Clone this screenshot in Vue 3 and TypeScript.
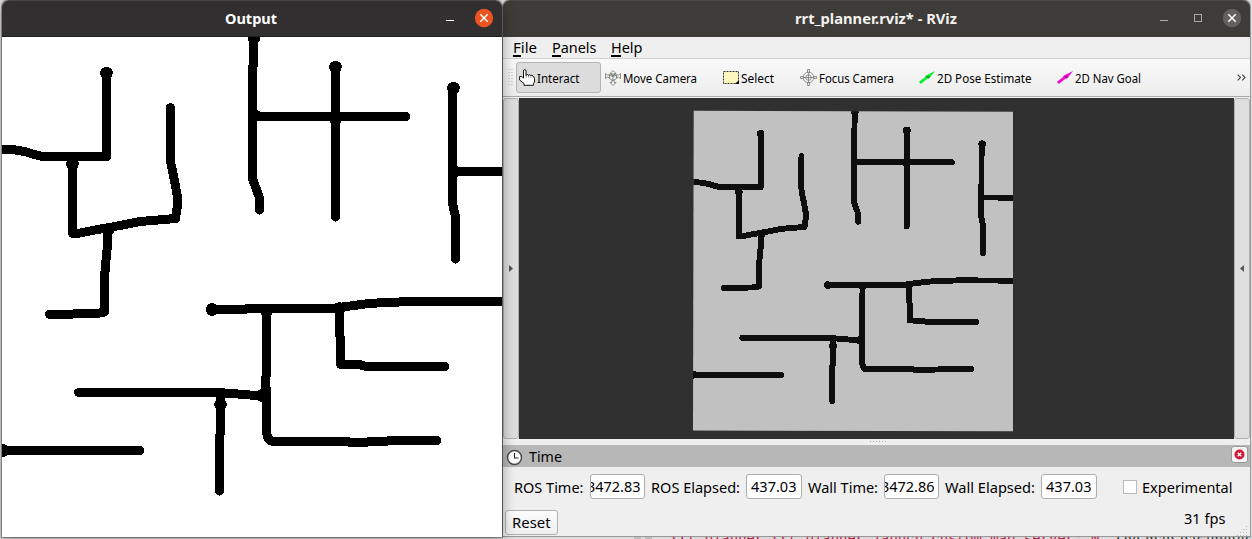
<script setup lang="ts">
import { h } from 'vue'

interface LabelProps { text: string; w: number; size?: number; weight?: number }

// Single line of text set to an exact advance width
const Label = (p: LabelProps) =>
  h('svg', { width: p.w, height: 20, overflow: 'visible', style: { flex: 'none', display: 'block' } }, [
    h('text', {
      x: 0, y: 15, 'font-size': p.size ?? 15, 'font-weight': p.weight ?? 400,
      fill: 'currentColor', textLength: p.w, lengthAdjust: 'spacingAndGlyphs',
    }, p.text),
  ])
Label.props = ['text', 'w', 'size', 'weight']

const walls: string[] = [
  '106.5,73 106.5,157 97,156.5 43,156.5 34,154.5 25,151.5 12,149.5 0,149',
  '72.5,158 72.5,233.5 80,233 95,230 112,227 140,221.5 158,220 175.5,218.5 177.5,205 177.5,197 174,178 171,164 170.5,158 170.5,107.5',
  '108,229 107.5,245 105.5,265 104.5,278 104.5,312 97,313.5 49.5,314.5',
  '253.5,36 253.5,64 252.5,68 252.5,179 256,188 259.5,198 259.5,210',
  '253,116.5 406,116.5',
  '335.5,67 335.5,217',
  '453,88 452.5,95 452.5,203 455.5,217 455.5,259',
  '455,171.5 504,171.5',
  '212,309.5 245,309.5 247,308.5 332,308.5 339,307.5 350,306 365,304 383,302.5 416,301.5 504,301.5',
  '78.5,392.5 217,392.5 232,393.5 250,395 265,395.8',
  '220.5,395 220.5,433 219.5,436 219.5,491',
  '0,450.5 140,450.5',
  '266.5,310 266.5,375 265.5,378 265.5,386 266.5,390 266.5,433 268,438 271,441 346,441 350,442.3 366,442.3 370,441.5 388,441 390,440.5 437,440.5',
  '339.5,308 339.5,335 340.5,338 340.5,364.5 360,364.7 366,366.5 445,366.5',
]
const dots: [number, number][] = [
  [106.5, 73], [72.5, 164], [108, 230], [254, 38], [335.5, 67], [335.5, 119.5],
  [453.5, 88], [212, 309.5], [262, 395.5], [220.5, 404.5], [3, 450.5],
  [266.5, 311], [339.5, 308.5],
]
const joints: [number, number][] = [[256, 115.5], [456, 171.5]]
const menus = [
  { text: 'File', w: 24, u: 8 }, { text: 'Panels', w: 44.5, u: 9 }, { text: 'Help', w: 31.5, u: 10 },
]
</script>

<template>
  <div class="desktop">
    <div class="page-behind">
      <span class="scrollbar"></span>
      <code>rrt_planner rrt_planner.launch custom_map_server:=0</code>
      <span class="prose">. The map parameter</span>
    </div>

    <div class="windows">
      <section class="window output">
        <header class="titlebar">
          <Label class="title" text="Output" :w="52" :weight="700" />
          <svg class="controls" width="60" height="37">
            <path d="M4 20.5h8" stroke="#fff" />
            <circle cx="42" cy="18" r="9.2" fill="#e95420" />
            <path d="M38.3 14.3l7.4 7.4m0-7.4l-7.4 7.4" stroke="#fff" stroke-width="1.5" />
          </svg>
        </header>
        <svg class="canvas" width="500" height="500" viewBox="2 37 500 500" shape-rendering="crispEdges">
          <polyline v-for="(p, i) in walls" :key="i" :points="p" fill="none" stroke="#000" stroke-width="9" stroke-linecap="round" stroke-linejoin="round" />
          <circle v-for="(d, i) in dots" :key="'d' + i" :cx="d[0]" :cy="d[1]" r="6.3" />
          <circle v-for="(d, i) in joints" :key="'j' + i" :cx="d[0]" :cy="d[1]" r="5.4" />
        </svg>
      </section>

      <section class="window rviz">
        <header class="titlebar">
          <Label class="title" text="rrt_planner.rviz* - RViz" :w="162" :weight="700" />
          <svg class="controls" width="98" height="37">
            <path d="M9 20.5h8" stroke="#aaa9a6" />
            <rect x="43.5" y="14.5" width="7" height="7" fill="none" stroke="#aaa9a6" />
            <circle cx="81" cy="18" r="9.2" fill="#62615f" />
            <path d="M77.3 14.3l7.4 7.4m0-7.4l-7.4 7.4" stroke="#fff" stroke-width="1.6" />
          </svg>
        </header>

        <nav class="menubar">
          <span v-for="m in menus" :key="m.text" class="menu">
            <Label :text="m.text" :w="m.w" />
            <i :style="{ width: m.u + 'px' }"></i>
          </span>
        </nav>

        <div class="toolbar">
          <svg class="grip" width="5" height="18"><path d="M1 0v18M4 0v18" stroke="#b5b5b5" stroke-dasharray="1 2" /></svg>
          <div class="tool active">
            <svg width="16" height="17" viewBox="0 0 16 17">
              <path d="M4.500 9V2q0-1.500 1.200-1.500T7 2v4.500q0-1 1.200-1t1.300 1q0-.7 1.100-.7T11.800 7q.2-.7 1.200-.7T14.300 8q1.200 0 1.200 1.300V13l-1 1.500v1.800H5V14.500L.6 11V7.500q2-.9 3.900 1.500z" fill="#fff" stroke="#111" />
              <path d="M7.200 6.500v2M9.500 7v1.500M11.800 7.500V9" stroke="#777" stroke-width=".8" />
            </svg>
            <Label text="Interact" :w="42.5" :size="13" />
          </div>
          <div class="tool move">
            <svg width="16" height="16" viewBox="0 0 16 16" fill="none" stroke="#7d827d" stroke-width=".9">
              <path d="M8 .5l3 3H9.200v2H6.800v-2H5zM8 15.500l3-3H9.200v-2H6.800v2H5zM.5 3.500v5l2-1.300 2 .8V4.800l-2 .3zM15.500 3.500v5l-2-1.300-2 .8V4.800l2 .3z" fill="#f5f5f5" />
              <path d="M4.500 5L8 4l3.500 1v3.500L8 10.500 4.500 8.500zM4.500 5L8 6.800 11.500 5M8 6.800v3.700" />
            </svg>
            <Label text="Move Camera" :w="74" :size="13" />
          </div>
          <div class="tool select">
            <svg width="17" height="14"><rect x=".5" y=".5" width="15" height="12" fill="#fcf8bd" stroke="#333" stroke-dasharray="2 1" /><path d="M16 9v4h-4z" /></svg>
            <Label text="Select" :w="33" :size="13" />
          </div>
          <div class="tool focus">
            <svg width="17" height="17" viewBox="0 0 17 17" fill="none" stroke="#858585" stroke-width=".9">
              <circle cx="8.5" cy="8.500" r="5.300" /><circle cx="8.500" cy="8.500" r="2.800" />
              <path d="M7.500.5h2v3h-2zM7.500 13.500h2v3h-2zM.5 7.500h3v2h-3zM13.500 7.500h3v2h-3zM8.500 4v9M4 8.500h9" />
            </svg>
            <Label text="Focus Camera" :w="75" :size="13" />
          </div>
          <div class="tool pose">
            <svg width="16" height="13"><path d="M0 10.800L6.500 5.800l-.5-.8L16 0 10 7.800 9 7.300 1.800 13z" fill="#0cf02b" /><path d="M6.500 5.500l3 2L11 5z" fill="#088c22" /></svg>
            <Label text="2D Pose Estimate" :w="94.500" :size="13" />
          </div>
          <div class="tool goal">
            <svg width="16" height="13"><path d="M0 10.800L6.500 5.800l-.5-.8L16 0 10 7.800 9 7.300 1.800 13z" fill="#f408d4" /><path d="M6.500 5.500l3 2L11 5z" fill="#a0078c" /></svg>
            <Label text="2D Nav Goal" :w="66" :size="13" />
          </div>
          <svg class="more" width="9" height="7"><path d="M.7.7l2.800 2.800L.7 6.300M5.200.7L8 3.500 5.200 6.300" fill="none" stroke="#444" stroke-width="1.100" /></svg>
        </div>

        <div class="workspace">
          <div class="handle"><svg width="4" height="7"><path d="M0 0l4 3.500L0 7z" fill="#555" /></svg></div>
          <svg class="scene" width="715" height="341" viewBox="519 98 715 341">
            <polygon points="693.700,110.700 1013,111.700 1013,431.300 693,430.500" fill="#c1c1c1" />
            <clipPath id="ground"><path d="M693.500 110.700L1013 111.700v320L693 431z" /></clipPath>
            <g clip-path="url(#ground)" shape-rendering="crispEdges">
              <g transform="translate(694 110.700) matrix(.6385 .002 -.0014 .6385 0 0) translate(-2 -37)">
                <polyline v-for="(p, i) in walls" :key="i" :points="p" fill="none" stroke="#0e0e0e" stroke-width="9.300" stroke-linecap="round" stroke-linejoin="round" />
                <circle v-for="(d, i) in dots" :key="'d' + i" :cx="d[0]" :cy="d[1]" r="6" fill="#0e0e0e" />
              </g>
            </g>
          </svg>
          <div class="handle"><svg width="4" height="7"><path d="M4 0L0 3.500 4 7z" fill="#555" /></svg></div>
        </div>

        <div class="splitter"><svg width="17" height="1"><path d="M0 .5h17" stroke="#aaa" stroke-dasharray="1 2" /></svg></div>

        <div class="panel-head">
          <svg width="17" height="17"><circle cx="8.500" cy="8.500" r="7" fill="#fff" stroke="#4b4b4b" stroke-width="1.500" /><path d="M8.500 4v5h4" fill="none" stroke="#222" stroke-width="1.100" /></svg>
          <Label text="Time" :w="33" />
          <span class="close"><svg width="11" height="11"><circle cx="5.500" cy="5.500" r="5" fill="#ce1836" /><path d="M3.700 3.700l3.600 3.600m0-3.600L3.700 7.300" stroke="#fff" stroke-width="1.300" /></svg></span>
        </div>

        <div class="clocks">
          <Label class="caption" text="ROS Time:" :w="69.500" />
          <span class="field"><Label text="3472.83" :w="53.500" /></span>
          <Label class="caption" text="ROS Elapsed:" :w="89" />
          <span class="field"><Label text="437.03" :w="45.500" /></span>
          <Label class="caption" text="Wall Time:" :w="70" />
          <span class="field"><Label text="3472.86" :w="53.500" /></span>
          <Label class="caption" text="Wall Elapsed:" :w="90" />
          <span class="field"><Label text="437.03" :w="45.500" /></span>
          <span class="check"></span>
          <Label class="caption" text="Experimental" :w="90.500" />
        </div>

        <footer class="status">
          <span class="reset"><Label text="Reset" :w="38.500" /></span>
          <Label class="fps" text="31 fps" :w="41.500" />
          <svg class="resize" width="11" height="11"><path d="M9 1.500h1M6 4.500h4M3 7.500h7M0 10.500h10" stroke="#b5b5b5" stroke-dasharray="1 2" /></svg>
        </footer>
      </section>
    </div>
  </div>
</template>

<style>
body { overflow: hidden; }
</style>

<style scoped>
.desktop {
  position: relative; width: 1252px; height: 539px; overflow: hidden; background: #dedede; color: #000;
  font-family: "Noto Sans", "Open Sans", sans-serif; font-size: 15px;
}
.page-behind {
  position: absolute; inset: 530px 0 auto 0; height: 20px; display: flex; padding-left: 634px;
  background: #dcdcdc; white-space: pre; line-height: 18px;
}
.scrollbar { width: 7px; margin-right: 5px; background: #bcbcbc; box-shadow: 11px 0 #bcbcbc; }
.page-behind code {
  width: 429px; margin-left: 25px; color: #b72350; background: #ded7da;
  font: 14px/18px "Liberation Mono", monospace;
}
.prose { font: 16px/18px "Liberation Serif", serif; letter-spacing: .78px; color: #333; margin-left: 4px; }
.windows { position: relative; display: flex; padding-left: 2px; gap: 1px; }
.window { position: relative; display: flex; flex-direction: column; border-radius: 7px 7px 0 0; }
.output {
  z-index: 1; width: 500px; height: 537px; background: #fff;
  box-shadow: 0 0 0 1px rgba(0, 0, 0, .32), 0 3px 14px rgba(0, 0, 0, .38);
}
.rviz { width: 747px; height: 536px; background: #efefef; box-shadow: 0 0 0 1px #999; }
.titlebar {
  position: relative; display: flex; flex: none; height: 37px; box-sizing: border-box; padding-top: 8px;
  justify-content: center; border-radius: 7px 7px 0 0; color: #fff;
  background: #312f30; border-top: 1px solid #484647; border-bottom: 1px solid #201f20;
}
.output .title { margin-right: 3px; }
.rviz .title { margin-right: 2px; }
.rviz .titlebar { background: #3d3c39; border-top-color: #4b4a47; border-bottom-color: #3d3c39; color: #f3f1ee; }
.controls { position: absolute; right: 0; top: -1px; }
.rviz .controls { right: 1px; }
.canvas { display: block; }
.menubar {
  display: flex; flex: none; height: 22px; box-sizing: border-box; padding: 1px 0 0 10px; gap: 14.500px;
  border-bottom: 1px solid #d0d0d0; background: #efefef;
}
.menu i { display: block; height: 1.500px; margin-top: -3px; background: #000; }
.toolbar {
  display: flex; flex: none; align-items: center; height: 38px; box-sizing: border-box;
  background: linear-gradient(#f9f9f9, #ededed); border-bottom: 1px solid #aaa;
}
.grip { margin-left: 5px; }
.tool { display: flex; align-items: center; }
.tool svg { flex: none; }
.active {
  width: 85px; height: 31px; box-sizing: border-box; margin: 0 4px 0 3px; padding-left: 2px; gap: 2px;
  border: 1px solid #b3b3b3; border-radius: 3px; background: #dcdcdc;
}
.move { gap: 2px; }
.select { gap: 1px; margin-left: 26px; }
.focus { gap: 2px; margin-left: 26px; }
.pose { gap: 2px; margin-left: 25px; }
.goal { gap: 2px; margin-left: 25px; }
.more { margin-left: auto; margin-right: 4px; }
.workspace { display: flex; flex: none; height: 341px; margin-top: 1px; }
.handle {
  width: 16px; box-sizing: border-box; display: flex; align-items: center; justify-content: center;
  border: 1px solid #b1b1b1; border-radius: 3px; background: #dedede;
}
.scene { display: block; flex: none; background: #303030; }
.splitter { display: flex; flex: none; height: 6px; align-items: center; justify-content: center; padding: 0 0 1px 3px; box-sizing: border-box; }
.panel-head { display: flex; flex: none; align-items: center; height: 22px; gap: 6px; padding: 0 2px 0 3px; background: #b7b7b7; }
.panel-head > svg { position: relative; top: 1px; }
.close {
  display: flex; align-items: center; justify-content: center; width: 17px; height: 17px; box-sizing: border-box;
  margin: -3px 0 0 auto; border: 1px solid #999; border-radius: 3px; background: #f5f5f5;
}
.clocks { display: flex; flex: none; align-items: center; height: 39px; padding: 0 17px 0 11px; gap: 6px; }
.caption { margin-top: 2px; }
.field {
  display: flex; flex: none; align-items: center; justify-content: flex-end; width: 55.500px; height: 25px;
  box-sizing: border-box; padding-right: 4px; border: 1px solid #adadad; border-radius: 3px;
  background: #fff; overflow: hidden;
}
.check { width: 14px; height: 14px; box-sizing: border-box; margin-left: 20px; margin-right: -1px; border: 1px solid #bbb; background: #fff; }
.status { display: flex; align-items: flex-start; height: 30px; padding: 4px 2px 0 2px; }
.reset {
  display: flex; align-items: center; justify-content: center; width: 53px; height: 25px; box-sizing: border-box;
  border: 1px solid #b1b1b1; border-radius: 3px; background: linear-gradient(#fdfdfd, #efefef);
}
.fps { margin-left: auto; margin-top: -1px; }
.resize { margin: 15px 0 0 12px; }
</style>
